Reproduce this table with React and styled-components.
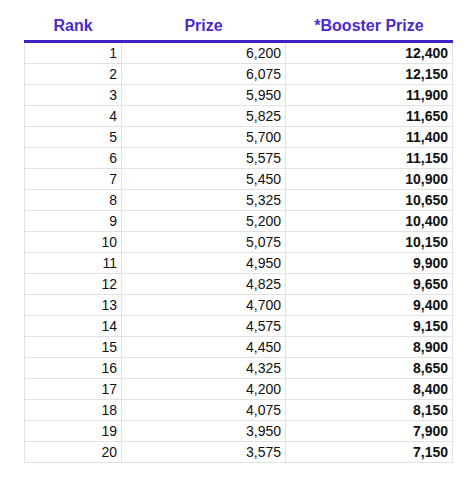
import React from "react";
import styled, { createGlobalStyle } from "styled-components";

const GlobalStyle = createGlobalStyle`
  body {
    margin: 0;
    background: #ffffff;
    font-family: "Liberation Sans", Arial, sans-serif;
  }
`;

const prizes = [
  6200, 6075, 5950, 5825, 5700, 5575, 5450, 5325, 5200, 5075, 4950, 4825,
  4700, 4575, 4450, 4325, 4200, 4075, 3950, 3575,
];

const fmt = (n) => n.toLocaleString("en-US");

export default function App() {
  return (
    <>
      <GlobalStyle />
      <Page>
        <PrizeTable>
          <colgroup>
            <col style={{ width: 97 }} />
            <col style={{ width: 164 }} />
            <col style={{ width: 167 }} />
          </colgroup>
          <thead>
            <tr>
              <HeadCell>Rank</HeadCell>
              <HeadCell>Prize</HeadCell>
              <HeadCell>*Booster Prize</HeadCell>
            </tr>
          </thead>
          <tbody>
            {prizes.map((prize, index) => (
              <tr key={index}>
                <Cell>{index + 1}</Cell>
                <Cell>{fmt(prize)}</Cell>
                <Cell bold>{fmt(prize * 2)}</Cell>
              </tr>
            ))}
          </tbody>
        </PrizeTable>
      </Page>
    </>
  );
}

const Page = styled.div`
  padding: 14px 0 0 24px;
`;

const PrizeTable = styled.table`
  width: 428px;
  table-layout: fixed;
  border-collapse: collapse;
`;

const HeadCell = styled.th`
  height: 24px;
  padding: 0 0 2px;
  text-align: center;
  vertical-align: middle;
  font-size: 16px;
  font-weight: bold;
  color: #4a2bcc;
  border-bottom: 3px solid #4022c4;
`;

const Cell = styled.td`
  height: 20px;
  padding: 0 4px 0 0;
  text-align: right;
  vertical-align: middle;
  font-size: 14px;
  font-weight: ${(p) => (p.bold ? "bold" : "normal")};
  color: #111111;
  border: 1px solid #e2e2e2;
  border-top: none;
`;
